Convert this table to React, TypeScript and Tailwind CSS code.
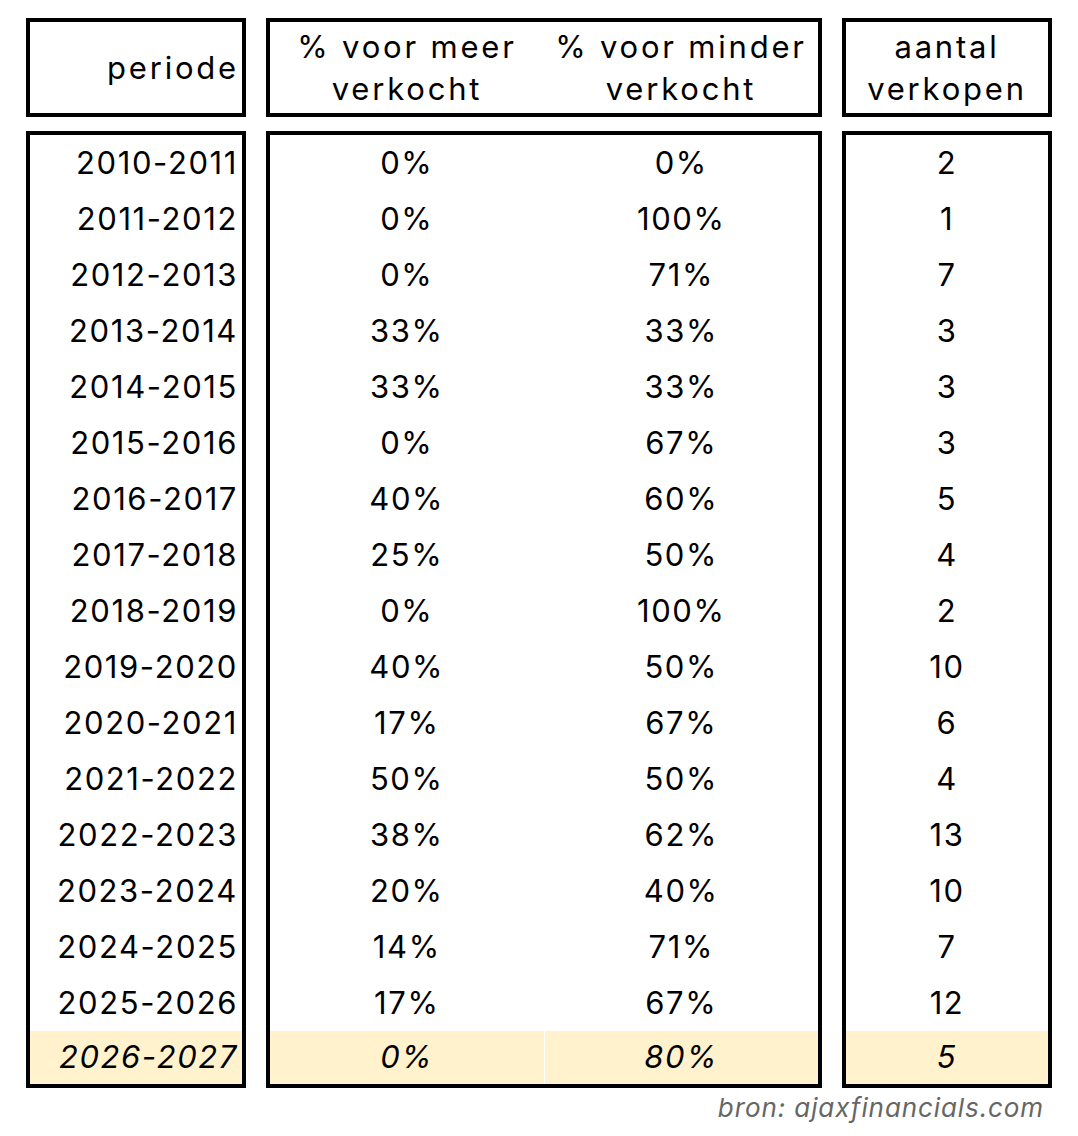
import React from 'react';

type Row = {
  periode: string;
  meer: string;
  minder: string;
  aantal: string;
};

const rows: Row[] = [
  {periode: '2010-2011', meer: '0%', minder: '0%', aantal: '2'},
  {periode: '2011-2012', meer: '0%', minder: '100%', aantal: '1'},
  {periode: '2012-2013', meer: '0%', minder: '71%', aantal: '7'},
  {periode: '2013-2014', meer: '33%', minder: '33%', aantal: '3'},
  {periode: '2014-2015', meer: '33%', minder: '33%', aantal: '3'},
  {periode: '2015-2016', meer: '0%', minder: '67%', aantal: '3'},
  {periode: '2016-2017', meer: '40%', minder: '60%', aantal: '5'},
  {periode: '2017-2018', meer: '25%', minder: '50%', aantal: '4'},
  {periode: '2018-2019', meer: '0%', minder: '100%', aantal: '2'},
  {periode: '2019-2020', meer: '40%', minder: '50%', aantal: '10'},
  {periode: '2020-2021', meer: '17%', minder: '67%', aantal: '6'},
  {periode: '2021-2022', meer: '50%', minder: '50%', aantal: '4'},
  {periode: '2022-2023', meer: '38%', minder: '62%', aantal: '13'},
  {periode: '2023-2024', meer: '20%', minder: '40%', aantal: '10'},
  {periode: '2024-2025', meer: '14%', minder: '71%', aantal: '7'},
  {periode: '2025-2026', meer: '17%', minder: '67%', aantal: '12'},
  {periode: '2026-2027', meer: '0%', minder: '80%', aantal: '5'},
];

const font = {fontFamily: 'Inter, "Open Sans", sans-serif'};

const App = () => {
  const last = rows.length - 1;

  // laatste rij is het lopende jaar (geel, cursief)
  const rowClass = (i: number) =>
    i === last ? 'flex-1 bg-[#fff2cc] italic' : 'h-14 bg-white';

  return (
    <div className="w-[1078px] h-[1136px] bg-white text-black pl-[26px] pt-[18px]" style={font}>
      {/* kopregel */}
      <div className="flex gap-5 h-[99px] text-[31px] leading-[42px] tracking-[2.8px]">
        <div className="w-[220px] border-4 border-black flex items-center justify-end pr-[3px]">
          periode
        </div>
        <div className="w-[556px] border-4 border-black flex">
          <div className="flex-1 flex items-center justify-center text-center">
            % voor meer<br />verkocht
          </div>
          <div className="flex-1 flex items-center justify-center text-center">
            % voor minder<br />verkocht
          </div>
        </div>
        <div className="w-[210px] border-4 border-black flex items-center justify-center text-center">
          aantal<br />verkopen
        </div>
      </div>

      {/* data */}
      <div className="flex gap-5 h-[957px] mt-[14px] text-[31px] tracking-[1.6px]">
        <div className="w-[220px] border-4 border-black flex flex-col">
          {rows.map((r, i) => (
            <div key={r.periode} className={`${rowClass(i)} flex items-center justify-end pr-[4px]`}>
              {r.periode}
            </div>
          ))}
        </div>
        <div className="w-[556px] border-4 border-black flex flex-col">
          {rows.map((r, i) => (
            <div key={r.periode} className={`${i === last ? 'flex-1 italic' : 'h-14'} flex gap-px`}>
              <div className={`flex-1 flex items-center justify-center ${i === last ? 'bg-[#fff2cc]' : ''}`}>
                {r.meer}
              </div>
              <div className={`flex-1 flex items-center justify-center ${i === last ? 'bg-[#fff2cc]' : ''}`}>
                {r.minder}
              </div>
            </div>
          ))}
        </div>
        <div className="w-[210px] border-4 border-black flex flex-col">
          {rows.map((r, i) => (
            <div key={r.periode} className={`${rowClass(i)} flex items-center justify-center`}>
              {r.aantal}
            </div>
          ))}
        </div>
      </div>

      <div className="w-[1026px] pr-2 text-right italic text-[#666666] text-[26px] leading-[40px] tracking-[0.9px]">
        bron: ajaxfinancials.com
      </div>
    </div>
  );
};

export default App;
